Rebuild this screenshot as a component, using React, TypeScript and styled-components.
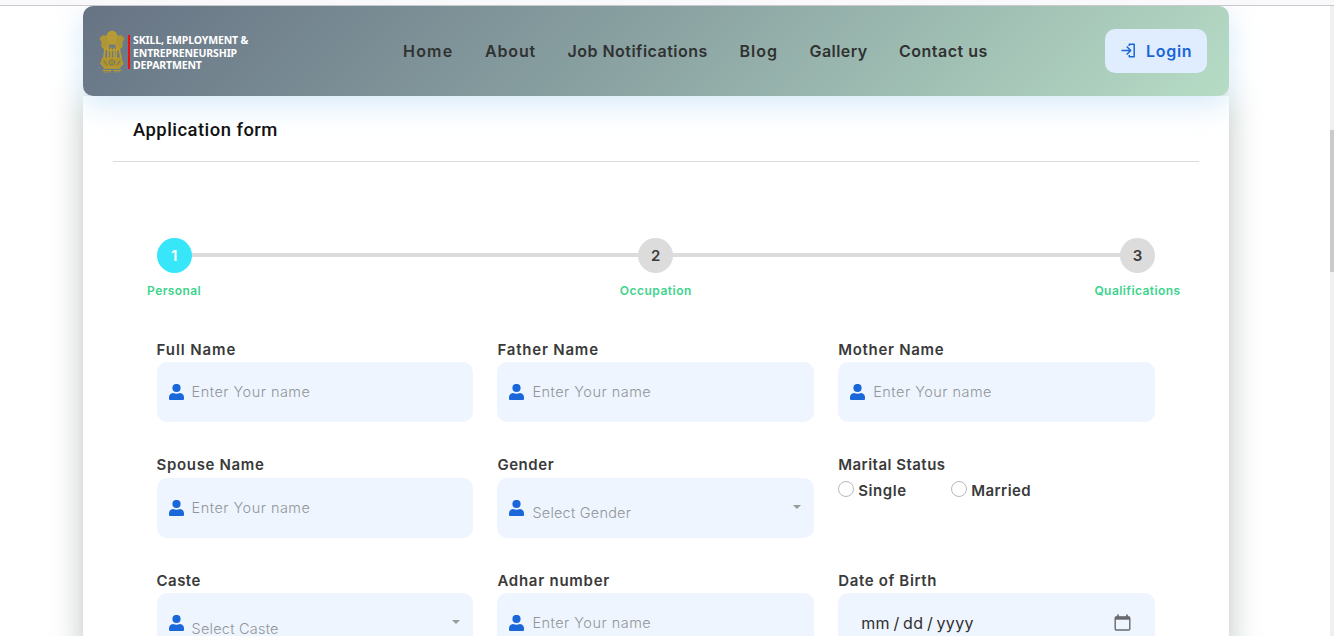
import React from "react";
import styled, { createGlobalStyle } from "styled-components";

const GlobalStyle = createGlobalStyle`
  *, *::before, *::after { box-sizing: border-box; }
  html, body { margin: 0; height: 100%; overflow: hidden; background: #fff; }
  body { font-family: Inter, "Open Sans", sans-serif; color: #3a3a3a; }
`;

const Page = styled.div`
  height: 636px;
  overflow: hidden;
  display: flex;
  flex-direction: column;
`;

const TopStrip = styled.div`
  flex: none;
  height: 6px;
  background: #f9f9fb;
  border-bottom: 1px solid #c9c9cb;
`;

const Viewport = styled.div`
  flex: 1;
  min-height: 0;
  display: flex;
  overflow: hidden;
`;

const Content = styled.main`
  flex: 1;
  min-width: 0;
  padding: 0 101px 0 83px;
  overflow: hidden;
`;

const ScrollTrack = styled.div`
  width: 4px;
  background: #f0f0f0;
  padding-top: 124px;
`;

const ScrollThumb = styled.div`
  height: 142px;
  background: #cacaca;
`;

const Header = styled.header`
  position: relative;
  z-index: 1;
  height: 90px;
  padding: 0 22px 0 16px;
  display: flex;
  align-items: center;
  border-radius: 10px;
  background: linear-gradient(135deg, #667384 0%, #8aa2a2 48%, #b6dcc5 100%);
  box-shadow: 0 8px 30px rgba(120, 187, 236, 0.32);
`;

const Brand = styled.div`
  width: 304px;
  display: flex;
  align-items: center;
`;

const BrandRule = styled.span`
  width: 2px;
  height: 34px;
  margin: 2px 3px 0 3px;
  background: #f00f0f;
`;

const BrandName = styled.div`
  margin-top: 4px;
  font: 700 10.5px/12.5px "Noto Sans", sans-serif;
  letter-spacing: -0.14px;
  color: #fff;
  white-space: nowrap;
`;

const Nav = styled.nav`
  flex: 1;
  display: flex;
  gap: 32px;
`;

const NavLink = styled.a<{ $w: number; $ls: number }>`
  width: ${(p) => p.$w}px;
  font-size: 16px;
  line-height: 24px;
  font-weight: 600;
  letter-spacing: ${(p) => p.$ls}px;
  color: #303232;
  white-space: nowrap;
`;

const LoginButton = styled.button`
  width: 102px;
  height: 44px;
  padding: 0 0 0 16px;
  border: 0;
  border-radius: 10px;
  display: flex;
  align-items: center;
  gap: 10px;
  background: #e0edff;
  color: #1a66d6;
  font: 600 16px/24px Inter, sans-serif;
  letter-spacing: 0.7px;
`;

const Card = styled.section`
  height: 560px;
  padding: 0 30px;
  background: #fff;
  box-shadow: 0 4px 30px rgba(60, 92, 76, 0.35);
`;

const Title = styled.h1`
  margin: 0;
  height: 66px;
  padding: 21px 20px 0;
  border-bottom: 1px solid #dcdcdc;
  font: 500 18.4px/26px Roboto, sans-serif;
  letter-spacing: 0.48px;
  color: #111;
`;

const Stepper = styled.ol`
  list-style: none;
  margin: 76px 44px 0 43.6px;
  padding: 0;
  height: 99.8px;
  display: flex;
  justify-content: space-between;
  background: linear-gradient(#dcdcdc, #dcdcdc) 0 15px / 100% 4px no-repeat;
`;

const Step = styled.li`
  width: 35px;
  display: flex;
  flex-direction: column;
  align-items: center;
  gap: 9px;
`;

const StepCircle = styled.span<{ $active?: boolean }>`
  width: 35px;
  height: 35px;
  border-radius: 50%;
  display: flex;
  align-items: center;
  justify-content: center;
  background: ${(p) => (p.$active ? "#38e6f9" : "#dcdcdc")};
  color: ${(p) => (p.$active ? "#fff" : "#3a3a3a")};
  font-size: 15px;
  font-weight: 600;
`;

const StepLabel = styled.span<{ $ls: number }>`
  font-size: 12px;
  line-height: 18px;
  font-weight: 600;
  letter-spacing: ${(p) => p.$ls}px;
  color: #3dd48c;
  white-space: nowrap;
`;

const FormGrid = styled.form`
  margin: 0 44px 0 43.6px;
  display: grid;
  grid-template-columns: repeat(3, 1fr);
  column-gap: 24px;
  row-gap: 31.4px;
`;

const Field = styled.div`
  height: 84.2px;
`;

const Label = styled.label<{ $ls?: number }>`
  display: block;
  height: 24.2px;
  font-size: 15px;
  line-height: 24px;
  font-weight: 600;
  letter-spacing: ${(p) => p.$ls ?? 0}px;
  color: #3a3a3a;
  white-space: nowrap;
`;

const Control = styled.div<{ $date?: boolean }>`
  height: 60px;
  padding: ${(p) => (p.$date ? "0 24px 0 23px" : "0 16px 0 12px")};
  display: flex;
  align-items: center;
  border-radius: 10px;
  background: #eef5fe;
`;

const Placeholder = styled.span<{ $select?: boolean }>`
  flex: 1;
  margin-left: 8px;
  padding-top: ${(p) => (p.$select ? 10.8 : 0)}px;
  font-size: 14.5px;
  line-height: 24px;
  font-weight: 300;
  letter-spacing: ${(p) => (p.$select ? 0.22 : 0.48)}px;
  color: #929599;
`;

const Caret = styled.span`
  border: 4px solid transparent;
  border-top-color: #999;
  border-bottom: 0;
  margin-right: -3px;
  margin-bottom: 1.4px;
`;

const DateText = styled.span`
  flex: 1;
  font-size: 16px;
  line-height: 24px;
  font-weight: 400;
  letter-spacing: 0.3px;
  word-spacing: -1.2px;
  color: #303030;
`;

const Choices = styled.div`
  display: flex;
`;

const Choice = styled.div<{ $w: number }>`
  width: ${(p) => p.$w}px;
  display: flex;
  gap: 4px;
  padding-top: 3px;
`;

const RadioMark = styled.span`
  width: 16px;
  height: 16px;
  border: 1px solid #b9b9b9;
  border-radius: 50%;
  background: #fff;
`;

const ChoiceLabel = styled(Label)`
  margin-top: -2px;
`;

const Emblem = () => (
  <svg width="26" height="44" viewBox="0 -1 26 44" fill="none" stroke="#bd9c27" strokeLinecap="round">
    <path d="M9 3 Q13-1 17 3 L18 8 L16 14 H10 L8 8Z" fill="#b59a35" />
    <path d="M8 6 L3 6 L1 9 L3 12 L3 17 L7 20 L10 14Z M18 6 L23 6 L25 9 L23 12 L23 17 L19 20 L16 14Z" fill="#ac9638" strokeWidth=".8" />
    <path d="M6 18 L5 28 M9 16 L9 28 M12 18 V28 M15 18 V28 M18 16 L17 28 M20 18 L22 28" strokeWidth="1.7" />
    <path d="M5 18 Q13 23 21 18" strokeWidth="1.6" />
    <path d="M4 28 H22 L24 34 L21 37 H5 L2 34Z" fill="#ad9430" />
    <path d="M5 31 L8 35 M18 35 L21 31" stroke="#6e7465" />
    <circle cx="13" cy="32.5" r="2.7" stroke="#6e7465" strokeWidth=".9" />
    <circle cx="13" cy="32.5" r=".8" fill="#6e7465" stroke="none" />
    <path d="M5 38 H21" strokeWidth="1.3" />
    <path d="M4 40.500 H12 M14.500 40.500 H22 M5 42 H6 M8 42 H9 M11 42 V41 M16 42 H17 M20 42 V41" strokeWidth="1" />
  </svg>
);

const LoginIcon = () => (
  <svg width="15" height="16" viewBox="0 0 15 16" fill="none" stroke="currentColor" strokeWidth="1.5" strokeLinejoin="round">
    <path d="M0.500 7.500 H9.500 M5.700 3.500 L9.700 7.500 L5.700 11.500" />
    <path d="M8.300 3 V1.200 H13.200 V13.700 H8.300 V12" />
  </svg>
);

const UserIcon = () => (
  <svg width="15" height="16" viewBox="0 0 15 16" fill="#1967d8">
    <circle cx="7.500" cy="4" r="4.100" />
    <path d="M4 9 Q7.500 10.400 11 9 Q15 9.500 15 13.500 V15 Q15 16 14 16 H1 Q0 16 0 15 V13.500 Q0 9.500 4 9Z" />
  </svg>
);

const CalendarIcon = () => (
  <svg width="17" height="19" viewBox="0 0 17 19" fill="none" stroke="#68696e">
    <rect x="1.200" y="3" width="14.600" height="13" rx="1.200" strokeWidth="1.400" />
    <path d="M1 4.200 H16" strokeWidth="3" />
    <path d="M4 0.500 V3 M13 0.500 V3" strokeWidth="1.700" />
  </svg>
);

const TextField = ({ label, ls }: { label: string; ls?: number }) => (
  <Field>
    <Label $ls={ls}>{label}</Label>
    <Control>
      <UserIcon />
      <Placeholder>Enter Your name</Placeholder>
    </Control>
  </Field>
);

const SelectField = ({ label, text, ls }: { label: string; text: string; ls?: number }) => (
  <Field>
    <Label $ls={ls}>{label}</Label>
    <Control>
      <UserIcon />
      <Placeholder $select>{text}</Placeholder>
      <Caret />
    </Control>
  </Field>
);

const links = [
  { text: "Home", w: 50, ls: 1.2 },
  { text: "About", w: 50.5, ls: 0.85 },
  { text: "Job Notifications", w: 140, ls: 0.48 },
  { text: "Blog", w: 38, ls: 1 },
  { text: "Gallery", w: 57.5, ls: 0.45 },
  { text: "Contact us", w: 89, ls: 0.5 },
];

const steps = [
  { text: "Personal", ls: 0.4 },
  { text: "Occupation", ls: 0.5 },
  { text: "Qualifications", ls: 0.42 },
];

export default function App() {
  return (
    <Page>
      <GlobalStyle />
      <TopStrip />
      <Viewport>
        <Content>
          <Header>
            <Brand>
              <Emblem />
              <BrandRule />
              <BrandName>
                SKILL, EMPLOYMENT &amp;
                <br />
                ENTREPRENEURSHIP
                <br />
                DEPARTMENT
              </BrandName>
            </Brand>
            <Nav>
              {links.map((l) => (
                <NavLink key={l.text} $w={l.w} $ls={l.ls}>
                  {l.text}
                </NavLink>
              ))}
            </Nav>
            <LoginButton>
              <LoginIcon />
              Login
            </LoginButton>
          </Header>
          <Card>
            <Title>Application form</Title>
            <Stepper>
              {steps.map((s, i) => (
                <Step key={s.text}>
                  <StepCircle $active={i === 0}>{i + 1}</StepCircle>
                  <StepLabel $ls={s.ls}>{s.text}</StepLabel>
                </Step>
              ))}
            </Stepper>
            <FormGrid>
              <TextField label="Full Name" ls={0.9} />
              <TextField label="Father Name" ls={0.8} />
              <TextField label="Mother Name" ls={0.7} />
              <TextField label="Spouse Name" ls={0.65} />
              <SelectField label="Gender" text="Select Gender" ls={0.55} />
              <Field>
                <Label $ls={0.48}>Marital Status</Label>
                <Choices>
                  <Choice $w={113}>
                    <RadioMark />
                    <ChoiceLabel $ls={0.6}>Single</ChoiceLabel>
                  </Choice>
                  <Choice $w={100}>
                    <RadioMark />
                    <ChoiceLabel $ls={0.45}>Married</ChoiceLabel>
                  </Choice>
                </Choices>
              </Field>
              <SelectField label="Caste" text="Select Caste" ls={0.45} />
              <TextField label="Adhar number" ls={0.75} />
              <Field>
                <Label $ls={0.65}>Date of Birth</Label>
                <Control $date>
                  <DateText>mm / dd / yyyy</DateText>
                  <CalendarIcon />
                </Control>
              </Field>
            </FormGrid>
          </Card>
        </Content>
        <ScrollTrack>
          <ScrollThumb />
        </ScrollTrack>
      </Viewport>
    </Page>
  );
}
